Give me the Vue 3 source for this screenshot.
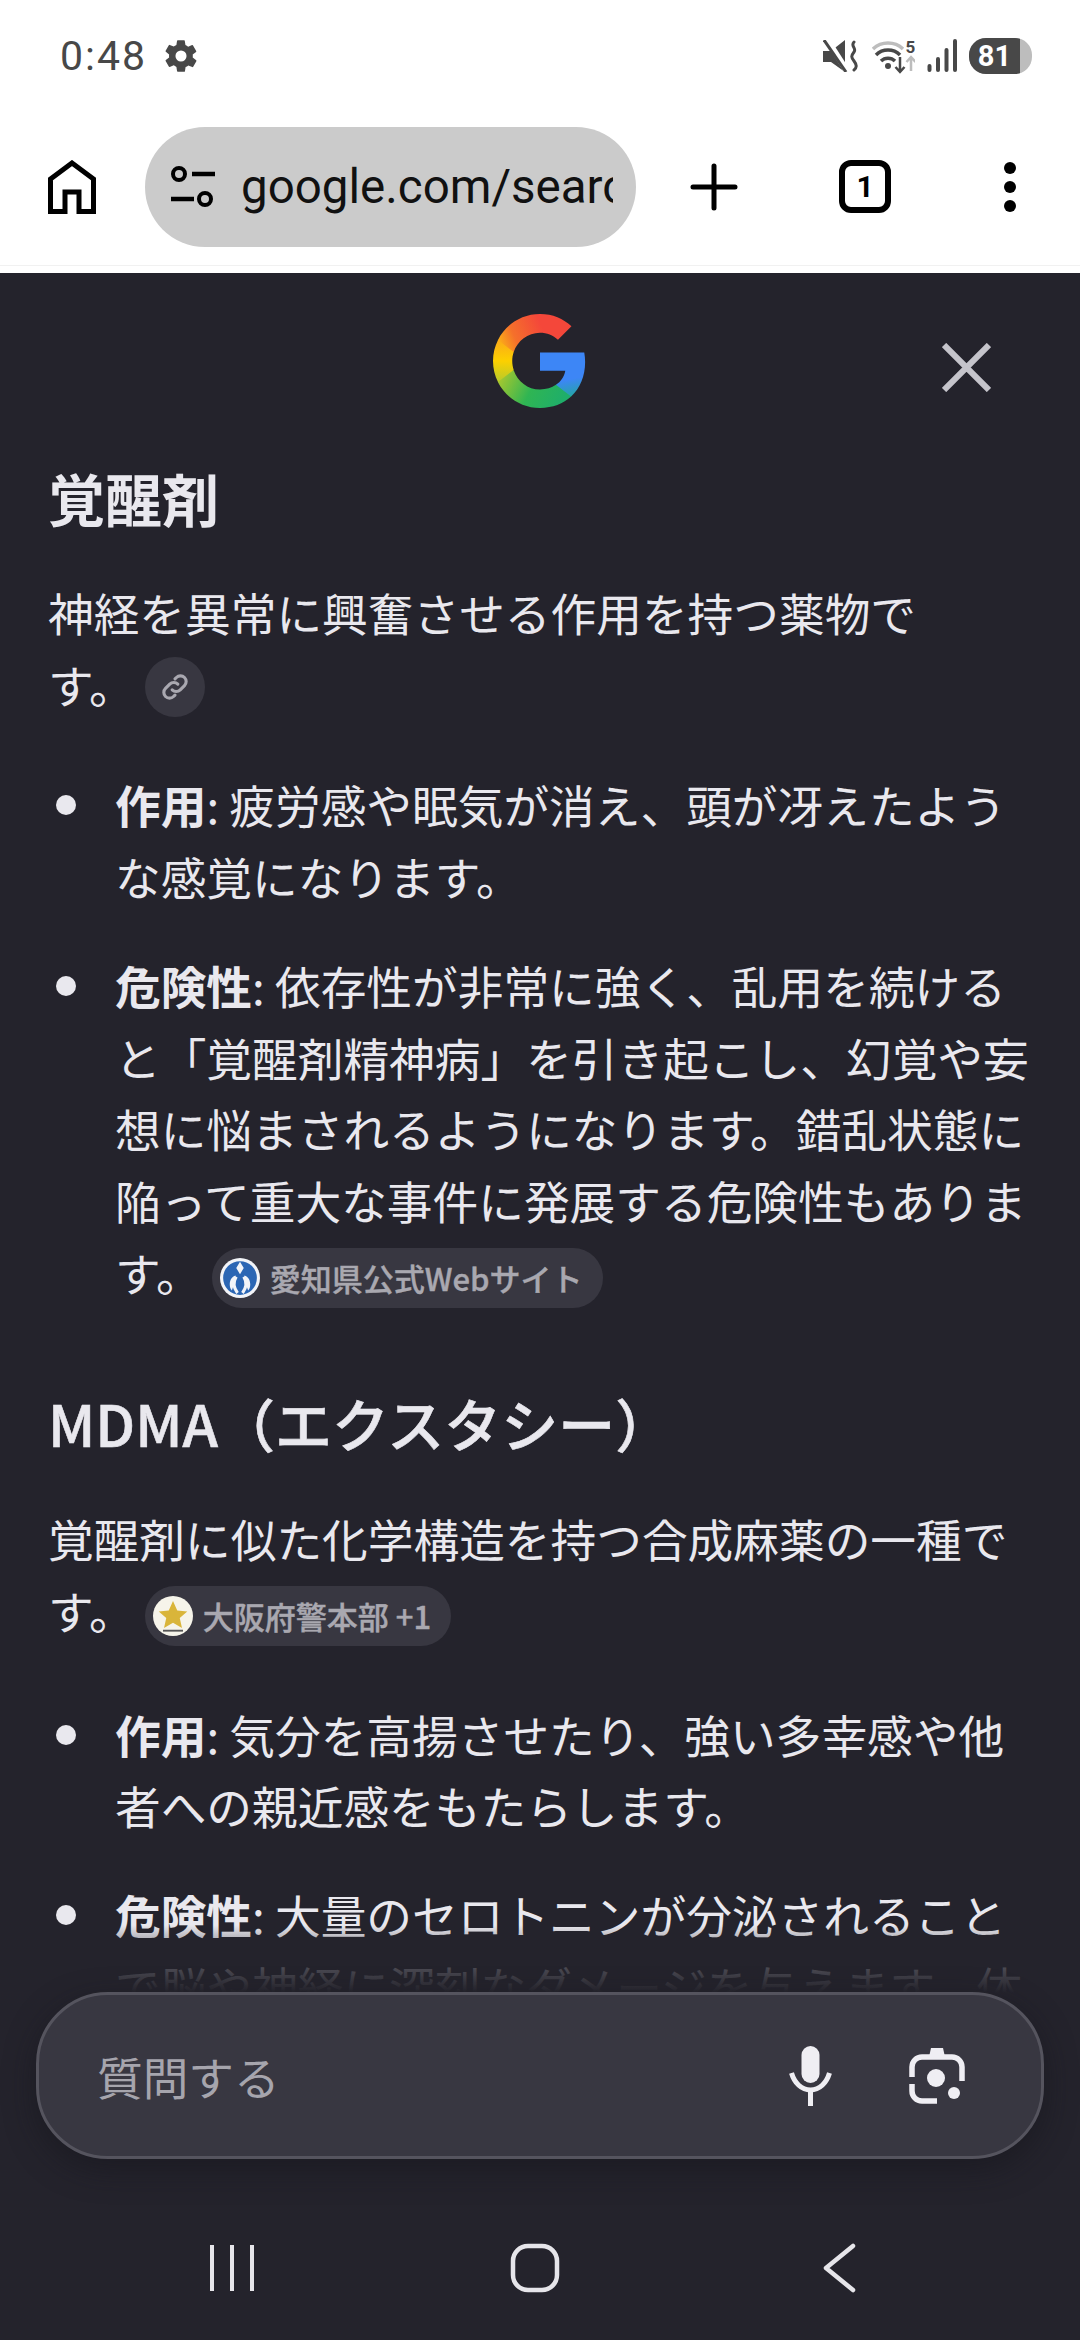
<template>
  <div class="screen">
    <div class="status-bar">
      <div class="status-left">
        <span class="time">0:48</span>
        <svg class="gear" viewBox="0 0 24 24"><path fill="#484848" d="M19.400 13a7.500 7.500 0 0 0 0-2l2.100-1.600a.5.5 0 0 0 .1-.6l-2-3.500a.5.5 0 0 0-.6-.2l-2.500 1a7.300 7.300 0 0 0-1.700-1l-.4-2.600A.5.5 0 0 0 14 2h-4a.5.5 0 0 0-.5.4l-.4 2.600a7.300 7.300 0 0 0-1.700 1l-2.500-1a.5.5 0 0 0-.6.2l-2 3.500a.5.5 0 0 0 .1.600L4.500 11a7.500 7.500 0 0 0 0 2l-2.100 1.600a.5.5 0 0 0-.1.600l2 3.500a.5.5 0 0 0 .6.200l2.500-1c.5.4 1.100.7 1.700 1l.4 2.600a.5.5 0 0 0 .5.500h4a.5.5 0 0 0 .5-.4l.4-2.600a7.300 7.300 0 0 0 1.700-1l2.500 1a.5.5 0 0 0 .6-.2l2-3.500a.5.5 0 0 0-.1-.6zM12 15.500a3.500 3.500 0 1 1 0-7 3.500 3.500 0 0 1 0 7z"/></svg>
      </div>
      <div class="status-right">
        <svg class="mute" viewBox="0 0 35 32">
          <path fill="#484848" d="M0 11h8L22 0v32L8 22H0z"/>
          <path stroke="#fff" stroke-width="6" d="M3 -2l23 36"/>
          <path stroke="#484848" stroke-width="3" d="M1 0l22 32"/>
          <path fill="none" stroke="#484848" stroke-width="3" stroke-linecap="round" d="M31 2c-4 4 3 6 0 10s-3 5 0 9 3 6 0 9"/>
        </svg>
        <svg class="wifi" viewBox="0 0 43 36">
          <path fill="none" stroke="#bdbdbd" stroke-width="3.500" d="M1 11a22 22 0 0 1 30 0"/>
          <path fill="none" stroke="#484848" stroke-width="3.500" d="M4 17a17 17 0 0 1 24 0M9 23a10 10 0 0 1 14 0"/>
          <circle cx="16" cy="28" r="3" fill="#484848"/>
          <path fill="none" stroke="#484848" stroke-width="2.500" d="M28 19v14M23.500 29l4.500 5 4.500-5"/>
          <path fill="none" stroke="#bdbdbd" stroke-width="2.500" d="M39 33V20M34.500 24l4.500-5 4.500 5"/>
          <text x="33.500" y="15" class="wifi-num">5</text>
        </svg>
        <svg class="signal" viewBox="0 0 31 34">
          <path stroke="#484848" stroke-width="4" stroke-linecap="round" d="M2.500 31v-4M11 31V20M19.500 31V11M28 31V2"/>
        </svg>
        <div class="battery"><span class="battery-fill">81</span></div>
      </div>
    </div>

    <div class="toolbar">
      <svg class="home-icon" viewBox="0 0 48 54">
        <path fill="none" stroke="#000" stroke-width="5" d="M2.500 51.500V19L24 3l21.500 16v32.500H31V32H17v19.500z"/>
      </svg>
      <div class="url-pill">
        <svg class="tune" viewBox="0 0 46 44">
          <circle cx="9" cy="9" r="6" fill="none" stroke="#000" stroke-width="4"/>
          <circle cx="35" cy="34" r="6" fill="none" stroke="#000" stroke-width="4"/>
          <path stroke="#000" stroke-width="4.500" d="M22 9h23M1 34h23"/>
        </svg>
        <div class="url-clip">google.com/search</div>
      </div>
      <svg class="plus" viewBox="0 0 48 48"><path stroke="#000" stroke-width="5" stroke-linecap="round" d="M24 3v42M3 24h42"/></svg>
      <div class="tab-box">1</div>
      <div class="dots"><i></i><i></i><i></i></div>
    </div>

    <div class="panel">
      <div class="panel-head">
        <svg class="g-logo" viewBox="2 2 44 44">
          <defs>
            <linearGradient id="gRed" gradientUnits="userSpaceOnUse" x1="34" y1="6" x2="6" y2="18">
              <stop offset="0.3" stop-color="#f4473a"/><stop offset="0.75" stop-color="#f5702b"/><stop offset="1" stop-color="#fbae17"/>
            </linearGradient>
            <linearGradient id="gYellow" gradientUnits="userSpaceOnUse" x1="6" y1="14" x2="6" y2="34">
              <stop offset="0" stop-color="#fba919"/><stop offset="0.5" stop-color="#fcd000"/><stop offset="1" stop-color="#b5ca2c"/>
            </linearGradient>
            <linearGradient id="gGreen" gradientUnits="userSpaceOnUse" x1="6" y1="30" x2="34" y2="44">
              <stop offset="0" stop-color="#a6c72f"/><stop offset="0.5" stop-color="#2fb553"/><stop offset="1" stop-color="#1fae6a"/>
            </linearGradient>
            <linearGradient id="gBlue" gradientUnits="userSpaceOnUse" x1="32" y1="20" x2="36" y2="42">
              <stop offset="0.6" stop-color="#3d86f6"/><stop offset="1" stop-color="#21a89c"/>
            </linearGradient>
          </defs>
          <path fill="url(#gBlue)" d="M45.120 24.500c0-1.560-.14-3.060-.4-4.500H24v8.510h11.840c-.51 2.750-2.060 5.080-4.390 6.640v5.520h7.110c4.160-3.830 6.560-9.470 6.560-16.170z"/>
          <path fill="url(#gGreen)" d="M24 46c5.940 0 10.920-1.970 14.560-5.330l-7.110-5.520c-1.970 1.320-4.490 2.200-7.450 2.200-5.730 0-10.580-3.870-12.310-9.070H4.340v5.700C7.960 41.070 15.400 46 24 46z"/>
          <path fill="url(#gYellow)" d="M11.690 28.180C11.250 26.860 11 25.450 11 24s.25-2.860.69-4.180v-5.700H4.340C2.850 17.090 2 20.450 2 24c0 3.550.85 6.910 2.340 9.880l7.350-5.700z"/>
          <path fill="url(#gRed)" d="M24 10.750c3.230 0 6.130 1.110 8.410 3.290l6.310-6.310C34.910 4.180 29.930 2 24 2 15.400 2 7.960 6.930 4.340 14.120l7.350 5.700c1.730-5.200 6.580-9.070 12.310-9.070z"/>
        </svg>
        <svg class="close" viewBox="0 0 48 48"><path stroke="#c5c4cb" stroke-width="6" d="M2 2l44 44M46 2L2 46"/></svg>
      </div>

      <div class="content">
        <h2 class="h-first">覚醒剤</h2>
        <p class="para">神経を異常に興奮させる作用を持つ薬物で<br>す。<span class="chip chip-round">
          <svg viewBox="0 0 24 24" class="link-icon"><path fill="none" stroke="#a9a8b0" stroke-width="2.200" stroke-linecap="round" d="M10 14a4 4 0 0 0 5.700 0l3-3A4 4 0 0 0 13 5.300l-1 1M14 10a4 4 0 0 0-5.700 0l-3 3a4 4 0 0 0 5.700 5.700l1-1"/></svg>
        </span></p>
        <ul class="list">
          <li v-for="item in firstItems" :key="item.text">
            <b>{{ item.label }}</b>: <span v-html="item.text"></span>
            <span v-if="item.chip" class="chip">
              <svg class="chip-logo" viewBox="0 0 32 32">
                <circle cx="16" cy="16" r="16" fill="#f2f4f8"/>
                <circle cx="16" cy="16" r="13.500" fill="#2b66b4"/>
                <path fill="#f2f4f8" d="M16 3l-3 5 3 5 3-5zM12.500 14c-5 1-6 9-3 12 1.500-4 2.500-8 3-12zM19.500 14c5 1 6 9 3 12-1.500-4-2.500-8-3-12z"/>
                <path fill="none" stroke="#f2f4f8" stroke-width="2.500" d="M13 15c-2.500 4-2 9 1 13M19 15c2.500 4 2 9-1 13"/>
              </svg>
              {{ item.chip }}
            </span>
          </li>
        </ul>

        <h2 class="h-second">MDMA（エクスタシー）</h2>
        <p class="para para-second">覚醒剤に似た化学構造を持つ合成麻薬の一種で<br>す。<span class="chip chip-near">
          <svg class="chip-logo" viewBox="0 0 32 32">
            <circle cx="16" cy="16" r="16" fill="#f6f4ea"/>
            <path fill="#d9b53a" d="M16 4l3.400 7.500 8 .8-6 5.300 1.800 7.900-7.200-4.200-7.200 4.200 1.800-7.900-6-5.300 8-.8z"/>
            <path fill="#555" d="M8 27h16v1.500H8z"/>
          </svg>
          大阪府警本部 +1
        </span></p>
        <ul class="list list-second">
          <li v-for="item in secondItems" :key="item.text">
            <b>{{ item.label }}</b>: <span v-html="item.text"></span>
          </li>
        </ul>
      </div>

      <div class="dock">
        <div class="composer">
          <span class="placeholder">質問する</span>
          <svg class="mic" viewBox="0 0 43 60">
            <rect x="12.500" y="0" width="18" height="37" rx="9" fill="#efeef3"/>
            <path fill="none" stroke="#efeef3" stroke-width="5" d="M2.500 27c3 10 10 17 19 17s16-7 19-17M21.500 44v16"/>
          </svg>
          <svg class="lens" viewBox="0 0 56 56">
            <path fill="none" stroke="#efeef3" stroke-width="5.500" d="M3 29V19a10 10 0 0 1 10-10h30a10 10 0 0 1 10 10v14M3 36v7a10 10 0 0 0 10 10h15"/>
            <path fill="#efeef3" d="M20 9l2-9h12l2 9z"/>
            <circle cx="27" cy="30" r="9" fill="#efeef3"/>
            <circle cx="45" cy="45" r="6" fill="#efeef3"/>
          </svg>
        </div>
        <div class="nav-bar">
          <svg class="nav-recent" viewBox="0 0 44 48"><path stroke="#e6e5ea" stroke-width="4" d="M2 1v46M22 1v46M42 1v46"/></svg>
          <svg class="nav-home" viewBox="0 0 50 50"><rect x="3" y="3" width="44" height="44" rx="15" fill="none" stroke="#e6e5ea" stroke-width="4.500"/></svg>
          <svg class="nav-back" viewBox="0 0 34 50"><path fill="none" stroke="#e6e5ea" stroke-width="4.500" stroke-linecap="round" stroke-linejoin="round" d="M31 3L4 25l27 22"/></svg>
        </div>
      </div>
    </div>
  </div>
</template>

<script setup>
const firstItems = [
  { label: '作用', text: '疲労感や眠気が消え、頭が冴えたよう<br>な感覚になります。' },
  {
    label: '危険性',
    text: '依存性が非常に強く、乱用を続ける<br>と「覚醒剤精神病」を引き起こし、幻覚や妄<br>想に悩まされるようになります。錯乱状態に<br>陥って重大な事件に発展する危険性もありま<br>す。',
    chip: '愛知県公式Webサイト',
  },
];

const secondItems = [
  { label: '作用', text: '気分を高揚させたり、強い多幸感や他<br>者への親近感をもたらします。' },
  { label: '危険性', text: '大量のセロトニンが分泌されること<br>で脳や神経に深刻なダメージを与えます。体<br>温調節ができなくなることもあります。' },
];
</script>

<style>
html, body {
  margin: 0;
  background: #24232c;
}
</style>

<style scoped>
.screen {
  width: 1080px;
  height: 2340px;
  display: flex;
  flex-direction: column;
  overflow: hidden;
  background: #fff;
  font-family: "Noto Sans CJK JP", "Noto Sans", sans-serif;
}
.status-bar {
  height: 112px;
  flex: none;
  display: flex;
  justify-content: space-between;
  align-items: center;
  padding: 0 48px 0 60px;
  box-sizing: border-box;
}
.status-left, .status-right {
  display: flex;
  align-items: center;
}
.time {
  font-family: Roboto, sans-serif;
  font-size: 41px;
  color: #484848;
  letter-spacing: 2px;
}
.gear {
  width: 38px;
  height: 38px;
  margin-left: 15px;
}
.mute { width: 35px; height: 32px; }
.wifi { width: 43px; height: 36px; margin-left: 14px; }
.wifi-num { font: 700 17px Roboto, sans-serif; fill: #484848; }
.signal { width: 31px; height: 34px; margin-left: 12px; }
.battery {
  width: 63px;
  height: 36px;
  border-radius: 17px;
  margin-left: 11px;
  background: #bdbdbd;
  overflow: hidden;
}
.battery-fill {
  display: block;
  width: 51px;
  height: 36px;
  background: #484848;
  color: #fff;
  font: 700 29px/36px Roboto, sans-serif;
  text-align: center;
}
.toolbar {
  height: 154px;
  flex: none;
  display: flex;
  align-items: center;
  box-sizing: border-box;
  padding: 0 0 4px 48px;
  border-bottom: 1px solid #f1f1f1;
  position: relative;
}
.home-icon { width: 48px; height: 54px; }
.url-pill {
  width: 491px;
  height: 120px;
  margin-left: 49px;
  border-radius: 60px;
  background: #cbcbcb;
  display: flex;
  align-items: center;
  padding-left: 25px;
  box-sizing: border-box;
}
.tune { width: 46px; height: 44px; flex: none; }
.url-clip {
  width: 372px;
  margin-left: 25px;
  overflow: hidden;
  white-space: nowrap;
  font-family: Roboto, sans-serif;
  font-size: 47.5px;
  color: #111;
  line-height: 60px;
}
.plus { width: 48px; height: 48px; margin-left: 54px; }
.tab-box {
  width: 52px;
  height: 53px;
  margin-left: 101px;
  box-sizing: border-box;
  border: 6px solid #000;
  border-radius: 12px;
  font: 700 30px/41px Roboto, sans-serif;
  text-align: center;
  color: #000;
}
.dots {
  margin-left: 113px;
  display: flex;
  flex-direction: column;
  gap: 7px;
}
.dots i {
  display: block;
  width: 12px;
  height: 12px;
  border-radius: 50%;
  background: #000;
}
.panel {
  flex: 1;
  position: relative;
  overflow: hidden;
  background: #24232c;
  color: #e9e8ee;
  margin-top: 7px;
}
.panel-head {
  height: 170px;
  position: relative;
  display: flex;
  justify-content: center;
}
.g-logo {
  width: 94px;
  height: 96px;
  margin-top: 40px;
}
.close {
  position: absolute;
  left: 942px;
  top: 70px;
  width: 49px;
  height: 49px;
}
.content {
  padding: 0 30px 0 48px;
  font-size: 45.7px;
  line-height: 71.7px;
}
h2 {
  margin: 0;
  font-size: 57px;
  line-height: 70px;
  font-weight: 500;
  color: #e9e8ee;
}
.h-first {
  margin-top: 19px;
  font-weight: 700;
}
.h-second {
  margin-top: 79px;
  -webkit-text-stroke: 0.6px #e9e8ee;
}
.para {
  margin: 45px 0 0;
}
.para-second { margin-top: 46px; }
.list {
  margin: 49px 0 0;
  padding: 0 0 0 67px;
  list-style: none;
}
.list-second { margin-top: 52px; }
.list li {
  position: relative;
  margin-bottom: 37px;
}
.list li::before {
  content: "";
  position: absolute;
  left: -59px;
  top: 26px;
  width: 20px;
  height: 20px;
  border-radius: 50%;
  background: #e9e8ee;
}
.list b { font-weight: 700; }
.chip {
  display: inline-flex;
  align-items: center;
  height: 60px;
  padding: 0 20px 0 8px;
  margin-left: 10px;
  vertical-align: -6px;
  border-radius: 30px;
  background: #383741;
  color: #a9a8b0;
  font-size: 31px;
  font-weight: 500;
  line-height: 60px;
  white-space: nowrap;
  -webkit-text-stroke: 0.4px #a9a8b0;
}
.chip-round {
  width: 60px;
  padding: 0;
  justify-content: center;
  margin-left: 10px;
  vertical-align: 0;
}
.chip-near { margin-left: 10px; }
.link-icon { width: 34px; height: 34px; }
.chip-logo {
  width: 40px;
  height: 40px;
  margin-right: 10px;
}
.dock {
  position: absolute;
  left: 0;
  right: 0;
  bottom: 0;
  height: 415px;
  padding-top: 67px;
  box-sizing: border-box;
  background: linear-gradient(to bottom, rgba(36, 35, 44, 0) 0, rgba(36, 35, 44, 0.78) 40px, #24232c 68px);
}
.composer {
  width: 1008px;
  height: 167px;
  margin-left: 36px;
  box-sizing: border-box;
  border: 3px solid #55545e;
  border-radius: 72px;
  background: #383741;
  box-shadow: 0 10px 30px rgba(20, 20, 26, 0.5);
  display: flex;
  align-items: center;
  padding: 0 76px 0 58px;
}
.placeholder {
  flex: 1;
  font-size: 45.7px;
  color: #a6a5ad;
}
.mic { width: 43px; height: 60px; }
.lens { width: 56px; height: 56px; margin-left: 77px; }
.nav-bar {
  display: flex;
  align-items: center;
  height: 48px;
  margin-top: 85px;
  padding-left: 210px;
}
.nav-recent { width: 44px; height: 48px; }
.nav-home { width: 50px; height: 50px; margin-left: 256px; }
.nav-back { width: 34px; height: 50px; margin-left: 262px; }
</style>
